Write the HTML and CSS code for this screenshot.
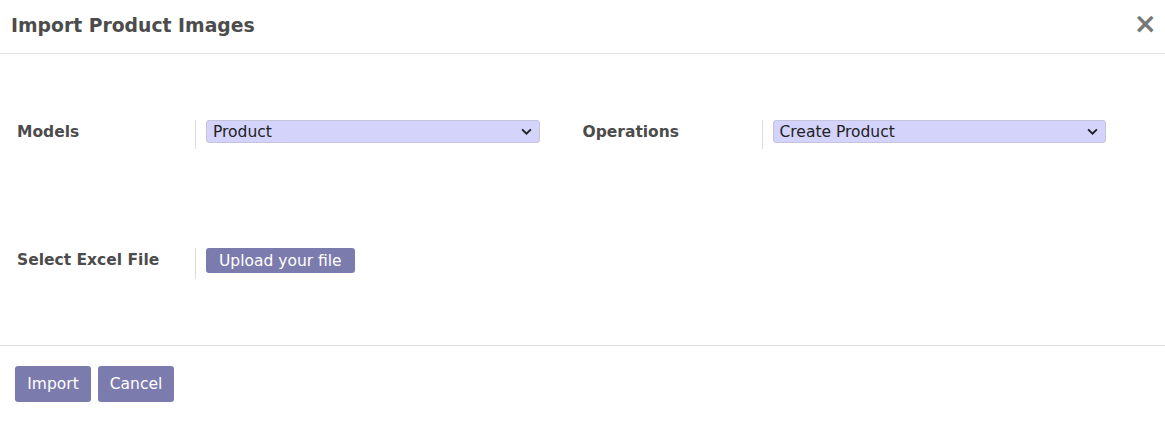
FILE: index.html
```html
<!DOCTYPE html>
<html>
<head>
<meta charset="utf-8">
<link rel="stylesheet" href="styles.css">
</head>
<body>
<div class="modal">
  <header class="modal-header">
    <h4 class="modal-title">Import Product Images</h4>
    <button class="close" type="button">×</button>
  </header>
  <main class="modal-body">
    <div class="row row-first">
      <div class="field">
        <label class="label">Models</label>
        <div class="value">
          <div class="select"><span>Product</span><svg class="chev" viewBox="0 0 10 6" width="10" height="6"><path d="M1 1l4 4 4-4" fill="none" stroke="#222" stroke-width="1.7"/></svg></div>
        </div>
      </div>
      <div class="field">
        <label class="label">Operations</label>
        <div class="value">
          <div class="select"><span>Create Product</span><svg class="chev" viewBox="0 0 10 6" width="10" height="6"><path d="M1 1l4 4 4-4" fill="none" stroke="#222" stroke-width="1.7"/></svg></div>
        </div>
      </div>
    </div>
    <div class="row row-second">
      <div class="field">
        <label class="label">Select Excel File</label>
        <div class="value">
          <button class="btn btn-small" type="button">Upload your file</button>
        </div>
      </div>
    </div>
  </main>
  <footer class="modal-footer">
    <button class="btn btn-footer" type="button">Import</button>
    <button class="btn btn-footer" type="button">Cancel</button>
  </footer>
</div>
</body>
</html>
```

FILE: styles.css
```css
* { box-sizing: border-box; }
html, body { margin: 0; padding: 0; background: #fff; }
body {
  font-family: "DejaVu Sans", sans-serif;
  color: #4c4c4c;
  width: 1165px;
  height: 423px;
  overflow: hidden;
}
.modal { display: flex; flex-direction: column; }
.modal-header {
  height: 54px;
  border-bottom: 1px solid #dee2e6;
  display: flex;
  align-items: center;
  justify-content: space-between;
  padding: 0 8px 2px 11px;
}
.modal-title {
  margin: 0;
  font-size: 18.8px;
  font-weight: bold;
  color: #4c4c4c;
}
.close {
  border: 0;
  background: none;
  font-family: "DejaVu Sans", sans-serif;
  font-size: 28px;
  font-weight: bold;
  color: #777;
  padding: 0;
  line-height: 1;
  margin-top: -4px;
}
.modal-body {
  height: 292px;
  border-bottom: 1px solid #dee2e6;
  display: flex;
  flex-direction: column;
  padding: 66px 17px 0;
}
.row { display: flex; }
.row-second { margin-top: 99px; }
.field { display: flex; width: 566px; }
.label {
  width: 178px;
  font-size: 15.5px;
  font-weight: bold;
  color: #4c4c4c;
  padding-top: 3px;
}
.value {
  border-left: 1px solid #dcdcdc;
  padding-left: 10px;
  height: 29px;
  width: 345px;
}
.field + .field .value { margin-left: 1px; }
.field + .field .select { width: 333px; }
.select {
  height: 23px;
  width: 334px;
  background: #d3d3fb;
  border: 1px solid #c4c4dc;
  border-radius: 3px;
  display: flex;
  align-items: center;
  justify-content: space-between;
  padding: 0 7px 0 6px;
  font-size: 15.5px;
  color: #222;
}
.chev { width: 11px; height: 7px; }
.row-second .value { height: 31px; }
.btn {
  background: #7c7bad;
  color: #fff;
  border: 0;
  border-radius: 3px;
  font-family: "DejaVu Sans", sans-serif;
  font-size: 15.5px;
  height: 36px;
  padding: 0 12px;
}
.btn-footer {
  width: 76px;
  padding: 0;
  text-align: center;
}
.btn-small {
  height: 25px;
  padding: 0 13px;
}
.modal-footer {
  display: flex;
  gap: 7px;
  padding: 20px 15px;
}
```
